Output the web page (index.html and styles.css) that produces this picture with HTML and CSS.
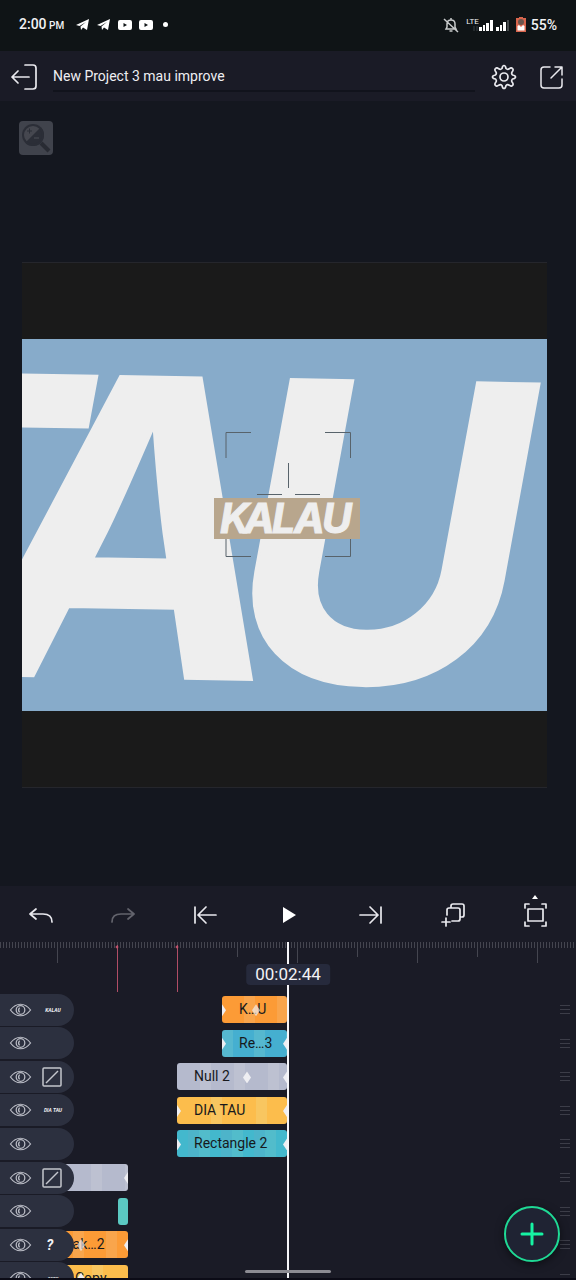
FILE: index.html
```
<!DOCTYPE html>
<html lang="en">
<head>
<meta charset="utf-8">
<meta name="viewport" content="width=device-width, initial-scale=1">
<title>New Project 3 mau improve</title>
<link rel="stylesheet" href="styles.css">
</head>
<body>
<svg class="defs" aria-hidden="true">
  <symbol id="eye" viewBox="0 0 24 16"><path d="M1.500 8Q6 2 12 2t10.500 6Q18 14 12 14T1.500 8Z"/><circle cx="12" cy="8" r="4.500"/><path d="M11 5.500q-2 2.500 0 5"/></symbol>
  <symbol id="null" viewBox="0 0 20 20"><rect x="1" y="1" width="18" height="18" rx="1"/><path d="M4 16 16 4"/></symbol>
  <symbol id="plane" viewBox="0 0 14 12"><path d="M0 6 13 0 11 11 7 8.500 5 11 4.500 7.500 10 3 3.500 7Z"/></symbol>
  <symbol id="tube" viewBox="0 0 14 10"><path fill-rule="evenodd" d="M2 0h10q2 0 2 2v6q0 2-2 2H2Q0 10 0 8V2Q0 0 2 0ZM5.500 3v4L9 5Z"/></symbol>
</svg>
<div class="app">
  <div class="status">
    <span class="clock">2:00 <small>PM</small></span>
    <div class="notices">
      <svg class="n-plane"><use href="#plane"/></svg>
      <svg class="n-plane"><use href="#plane"/></svg>
      <svg class="n-tube"><use href="#tube"/></svg>
      <svg class="n-tube"><use href="#tube"/></svg>
      <i class="dot"></i>
    </div>
    <svg class="bell" viewBox="0 0 16 16"><path d="M3 12h10l-1-2V7Q12 3 8 3T4 7v3ZM8 1v2M6.500 14h3M1 2l14 13"/></svg>
    <div class="signal">
      <span class="lte">LTE<svg viewBox="0 0 8 5"><path d="M3 0v5M6 0v5"/></svg></span>
      <svg class="bars" viewBox="0 0 31 12"><path d="M0 8h3v4H0ZM4 6h2v6H4ZM7 4h3v8H7ZM11 1h3v11h-3ZM17 8h3v4h-3ZM21 6h2v6h-2ZM24 3h3v9h-3Z"/><path class="dim" d="M28 1h2v11h-2Z"/></svg>
    </div>
    <svg class="battery" viewBox="0 0 10 15"><path fill="#d8654d" d="M3 0h4v1h3v14H0V1h3Z"/><circle cx="5" cy="5" r="3" fill="#6b554d"/><path fill="#fff" d="M1.500 9 3 8 5 10l2-2 1.500 1v4.500h-7Z"/></svg>
    <span class="percent">55%</span>
  </div>

  <header class="topbar">
    <button class="icon-btn" aria-label="Back"><svg class="line i26" viewBox="0 0 26 26"><path d="M1 13h17M7 7l-6 6 6 6M14 1h8q3 0 3 3v18q0 3-3 3h-8"/></svg></button>
    <input class="title" aria-label="Project name" value="New Project 3 mau improve">
    <button class="icon-btn" aria-label="Settings"><svg class="line i26" viewBox="0 0 26 26"><circle cx="13" cy="13" r="4"/><path d="M13 1.500Q14.500 1.500 15 4.500Q16.500 6 18.200 4.800Q20.500 3 21.300 4.500Q23 5.500 21.200 7.800Q20 9.500 21.500 11Q24.500 11.500 24.500 13T21.500 15Q20 16.500 21.200 18.200Q23 20.500 21.300 21.500Q20.500 23 18.200 21.200Q16.500 20 15 21.500Q14.500 24.500 13 24.500T11 21.500Q9.500 20 7.800 21.200Q5.500 23 4.700 21.500Q3 20.500 4.800 18.200Q6 16.500 4.500 15Q1.500 14.500 1.500 13T4.500 11Q6 9.500 4.800 7.800Q3 5.500 4.700 4.500Q5.500 3 7.800 4.800Q9.500 6 11 4.500Q11.500 1.500 13 1.500Z"/></svg></button>
    <button class="icon-btn" aria-label="Export"><svg class="line thin i24" viewBox="0 0 24 24"><path d="M10 2H4Q1 2 1 5v15q0 3 3 3h15q3 0 3-3v-6M11 13 22 2M15 2h7v8"/></svg></button>
  </header>

  <main class="preview">
    <button class="zoom" aria-label="Zoom"><svg viewBox="0 0 34 34"><circle cx="14" cy="14" r="11" fill="#2b2e37"/><path d="M22 6A11 11 0 0 0 6 22Z" fill="#45474f"/><circle cx="14" cy="14" r="10" fill="none" stroke="#2b2e37" stroke-width="2"/><path d="M8 10h5M10.500 7.500v5" stroke="#2b2e37"/><path d="M15 17h5" stroke="#4c4e57"/><path d="m22 22 8 8" stroke="#282b33" stroke-width="4"/></svg></button>
    <svg class="canvas" viewBox="0 0 525 526" role="img" aria-label="DIA TAU, KALAU">
      <rect class="stage" width="525" height="526"/>
      <path class="edge" d="M0 .5h525M0 525.500h525"/>
      <svg y="77" width="525" height="372" viewBox="0 77 525 372">
        <rect class="sky" y="77" width="525" height="372"/>
        <text class="big" x="-222 -50 206" y="418" transform="rotate(1 262 400)">TAU</text>
      </svg>
      <path class="guides" d="M204 196v-25.500h25M303 170.500h25.500V196M204 269v25.500h25M303 294.500h25.500V269M266.500 201v25M235 232.500h25M273 232.500h25"/>
      <rect class="tan" x="192" y="236" width="146" height="41"/>
      <text class="small" x="198 222 250 272 300" y="271">KALAU</text>
    </svg>
  </main>

  <nav class="tools" aria-label="Playback">
    <button aria-label="Undo"><svg class="line i26" viewBox="0 0 26 26"><path d="M8 7 2 12l6 5M2 12h13q9 0 9 8"/></svg></button>
    <button aria-label="Redo" disabled><svg class="line i26" viewBox="0 0 26 26"><path d="m18 7 6 5-6 5M24 12H11q-9 0-9 8"/></svg></button>
    <button aria-label="Go to start"><svg class="line i26" viewBox="0 0 26 26"><path d="M2 5v16M13 5l-8 8 8 8M5 13h18"/></svg></button>
    <button aria-label="Play"><svg class="solid i26" viewBox="0 0 26 26"><path d="M8 5v16l13-8Z"/></svg></button>
    <button aria-label="Go to end"><svg class="line i26" viewBox="0 0 26 26"><path d="M24 5v16M13 5l8 8-8 8M3 13h18"/></svg></button>
    <button aria-label="Duplicate"><svg class="line i26" viewBox="0 0 26 26"><path d="M7 13V8q0-2 2-2h9q2 0 2 2v9q0 2-2 2h-6M11 5V4q0-2 2-2h9q2 0 2 2v9q0 2-2 2h-1M2 20h8M6 16v8"/></svg></button>
    <button aria-label="Fit view"><svg class="line fit" viewBox="0 0 26 34"><path d="M6 13h15v12H6ZM3 12V8h4M20 8h4v4M3 26v4h4M20 30h4v-4"/><path class="fill" d="m13-1-3 4h6Z"/></svg></button>
  </nav>

  <section class="timeline" aria-label="Timeline">
    <svg class="ruler">
      <defs>
        <pattern id="minor" width="3" height="6" patternUnits="userSpaceOnUse"><rect width="1" height="6"/></pattern>
        <pattern id="major" width="120" height="21" patternUnits="userSpaceOnUse" x="57"><rect width="1" height="21"/><rect x="60" width="1" height="15"/></pattern>
      </defs>
      <rect width="100%" height="6" fill="url(#minor)"/>
      <rect width="100%" height="21" fill="url(#major)"/>
      <g class="marks"><path d="M117.500 3v47M177.500 3v47"/><circle cx="117" cy="5" r="1"/><circle cx="177" cy="5" r="1"/></g>
    </svg>
    <ol class="rows">
      <li>
        <div class="clip orange key-l" style="margin-left:222px;width:65px">K…U<i class="key mid" style="left:30px"></i></div>
        <div class="head"><button aria-label="Hide layer"><svg class="eye"><use href="#eye"/></svg></button><span class="tiny">KALAU</span></div><i class="grip"></i></li>
      <li>
        <div class="clip blue key-l key-r" style="margin-left:222px;width:65px">Re…3</div>
        <div class="head"><button aria-label="Hide layer"><svg class="eye"><use href="#eye"/></svg></button></div><i class="grip"></i></li>
      <li>
        <div class="clip gray key-r" style="margin-left:177px;width:110px">Null 2<i class="key" style="left:66px"></i></div>
        <div class="head"><button aria-label="Hide layer"><svg class="eye"><use href="#eye"/></svg></button><svg class="null"><use href="#null"/></svg></div><i class="grip"></i></li>
      <li>
        <div class="clip yellow key-l key-r" style="margin-left:177px;width:110px">DIA TAU</div>
        <div class="head"><button aria-label="Hide layer"><svg class="eye"><use href="#eye"/></svg></button><span class="tiny">DIA TAU</span></div><i class="grip"></i></li>
      <li>
        <div class="clip teal key-l key-r" style="margin-left:177px;width:110px">Rectangle 2</div>
        <div class="head"><button aria-label="Hide layer"><svg class="eye"><use href="#eye"/></svg></button></div><i class="grip"></i></li>
      <li>
        <div class="clip gray key-r" style="margin-left:0px;width:128px"></div>
        <div class="head"><button aria-label="Hide layer"><svg class="eye"><use href="#eye"/></svg></button><svg class="null"><use href="#null"/></svg></div><i class="grip"></i></li>
      <li>
        <div class="clip mint" style="margin-left:118px;width:10px"></div>
        <div class="head"><button aria-label="Hide layer"><svg class="eye"><use href="#eye"/></svg></button></div><i class="grip"></i></li>
      <li>
        <div class="clip orange key-r" style="margin-left:51px;width:77px">tak…2<i class="key mid" style="left:26px"></i></div>
        <div class="head"><button aria-label="Hide layer"><svg class="eye"><use href="#eye"/></svg></button><b class="what">?</b></div><i class="grip"></i></li>
      <li>
        <div class="clip yellow" style="margin-left:58px;width:70px">Copy<i class="key" style="left:19px"></i></div>
        <div class="head"><button aria-label="Hide layer"><svg class="eye"><use href="#eye"/></svg></button><span class="tiny">copy</span></div><i class="grip"></i></li>
    </ol>
    <div class="playhead"></div>
    <output class="time">00:02:44</output>
    <button class="add" aria-label="Add layer"><svg viewBox="0 0 24 24"><path d="M12 2v20M2 12h20"/></svg></button>
    <div class="home"></div>
  </section>
</div>
</body>
</html>
```
FILE: styles.css
```
* { box-sizing: border-box; }
body { margin: 0; background: #1a1b26; color: #f2f2f5; font: 14px/20px Roboto, "Noto Sans", sans-serif; }
button { border: 0; padding: 0; background: none; color: inherit; font: inherit; display: flex; align-items: center; justify-content: center; }
svg { display: block; flex: none; }
.defs { position: absolute; width: 0; height: 0; }
.app { height: 100vh; display: flex; flex-direction: column; overflow: hidden; border-bottom: 2px solid #0b0b16; }
.line { fill: none; stroke: #e9e9ee; stroke-width: 1.700; stroke-linecap: round; stroke-linejoin: round; }
.thin { stroke-width: 1.500; }
.solid { fill: #fff; }
.i26 { width: 26px; height: 26px; }
.i24 { width: 24px; height: 24px; }

.status { height: 51px; flex: none; display: flex; align-items: center; padding: 0 19px 2px; background: #0f1416; font-weight: 500; }
.clock small { font-size: 10px; margin-left: -1px; }
.notices { flex: 1; display: flex; align-items: center; gap: 7px; margin-left: 12px; fill: #fff; }
.n-plane { width: 14px; height: 12px; }
.n-tube { width: 14px; height: 10px; }
.dot { width: 5px; height: 5px; border-radius: 50%; background: #fff; margin-left: 3px; }
.bell { width: 16px; height: 16px; fill: none; stroke: #c9cbcc; stroke-width: 1.500; margin-right: 7px; }
.signal { display: flex; align-items: center; margin-right: 6px; }
.lte { display: flex; flex-direction: column; align-items: flex-end; font-size: 8px; line-height: 8px; font-weight: 400; }
.lte svg { width: 8px; height: 5px; stroke: #3b4144; }
.bars { width: 31px; height: 12px; fill: #fff; }
.bars .dim { fill: #454a4c; }
.battery { width: 10px; height: 15px; margin-right: 5px; }

.topbar { height: 50px; flex: none; display: flex; align-items: center; padding: 2px 12px 0 11px; background: #1a1b26; }
.title { flex: 1; min-width: 0; height: 30px; margin: 0 16px; border: 0; border-bottom: 2px solid #11131c; padding: 0; background: none; color: #eeeef2; font: 14px/24px Roboto, "Noto Sans", sans-serif; outline: 0; }
.topbar .icon-btn:last-child { margin-left: 23px; }

.preview { flex: 1; min-height: 0; padding: 20px 29px 0 22px; background: #14171f; position: relative; display: flex; flex-direction: column; }
.zoom { width: 34px; height: 34px; margin: 0 0 107px -3px; flex: none; border-radius: 4px; background: #40434c; }
.zoom svg { width: 34px; height: 34px; }
.canvas { width: 100%; overflow: hidden; }
.stage { fill: #1a1a1a; }
.edge { stroke: #25262c; }
.sky { fill: #87abca; }
.big, .small { font-family: Inter, Arial, sans-serif; font-weight: 700; font-style: italic; fill: #eee; stroke: #eee; }
.big { font-size: 413px; stroke-width: 3px; }
.small { font-size: 41px; }
.guides { fill: none; stroke: #58636b; }
.tan { fill: #b8a68d; }

.tools { height: 56px; flex: none; display: grid; grid-template-columns: repeat(7, 1fr); padding-top: 2px; background: #1a1b26; }
.tools button:disabled { opacity: .35; }
.fit { width: 26px; height: 34px; margin-bottom: 12px; overflow: visible; align-self: end; }
.fit .fill { fill: #fff; stroke: none; }

.timeline { height: 336px; flex: none; position: relative; overflow: hidden; background: #1a1b26; }
.ruler { width: 100%; height: 51px; fill: #44454f; }
.marks { stroke: #b14d66; fill: #ff6f8c; }
.rows { list-style: none; margin: 0; padding: 0; height: 302px; display: grid; grid-auto-rows: 1fr; }
.rows li { display: grid; grid-template-columns: 1fr auto; align-items: center; }
.head { grid-area: 1 / 1; width: 74px; height: 32px; padding-left: 9px; display: flex; align-items: center; gap: 10px; border-radius: 0 16px 16px 0; background: #2c303f; z-index: 1; }
.eye { width: 23px; height: 16px; fill: none; stroke: #bbbdc6; stroke-width: 1.300; }
.null { width: 20px; height: 20px; fill: none; stroke: #c4c6cd; stroke-width: 1.500; }
.tiny { width: 22px; text-align: center; white-space: nowrap; font: italic 700 5px/8px Roboto, sans-serif; }
.what { width: 16px; text-align: center; font: italic 700 14px/20px Roboto, sans-serif; }
.clip { grid-area: 1 / 1; height: 27px; text-indent: 17px; border-radius: 3px; position: relative; overflow: hidden; color: #17191c; line-height: 27px; white-space: nowrap; }
.orange { background: repeating-linear-gradient(90deg, #fc9b36 0 22px, #f9a54c 22px 33px); }
.blue { background: repeating-linear-gradient(90deg, #56b8cf 0 11px, #45afd0 11px 32px); }
.gray { background: repeating-linear-gradient(90deg, #b5bacd 0 23px, #bdc1d1 23px 34px); }
.yellow { background: repeating-linear-gradient(90deg, #fcbd4c 0 34px, #f8c660 34px 45px); }
.teal { background: repeating-linear-gradient(90deg, #43b8cd 0 11px, #4db4ca 11px 22px, #52bccb 22px 33px); }
.mint { background: #5bc9c2; }
.key, .key-l::before, .key-r::after { content: ""; position: absolute; top: 8px; width: 8px; height: 12px; background: #eeeef2; clip-path: polygon(50% 0, 100% 50%, 50% 100%, 0 50%); }
.key.mid { opacity: .7; }
.key-l::before { left: -4px; }
.key-r::after { right: -4px; }
.grip { grid-area: 1 / 2; width: 10px; height: 9px; margin-right: 6px; background: repeating-linear-gradient(#3c3d48 0 1px, transparent 1px 4px); }
.playhead { position: absolute; left: 50%; top: 0; bottom: 0; width: 2px; margin-left: -1px; background: #f5f5f8; }
.time { position: absolute; left: 50%; top: 22px; transform: translateX(-50%); padding: 0 9px; border-radius: 4px; background: #262a3c; font-size: 17px; line-height: 21px; }
.add { position: absolute; right: 16px; bottom: 16px; width: 56px; height: 56px; border: 2px solid #1fd995; border-radius: 50%; background: #1f2333; box-shadow: 0 2px 8px #0008; z-index: 2; }
.add svg { width: 24px; height: 24px; stroke: #16f3a3; stroke-width: 3; stroke-linecap: round; }
.home { position: absolute; left: 50%; bottom: 5px; width: 86px; height: 3px; margin-left: -43px; border-radius: 2px; background: #8b8b92; }
```
